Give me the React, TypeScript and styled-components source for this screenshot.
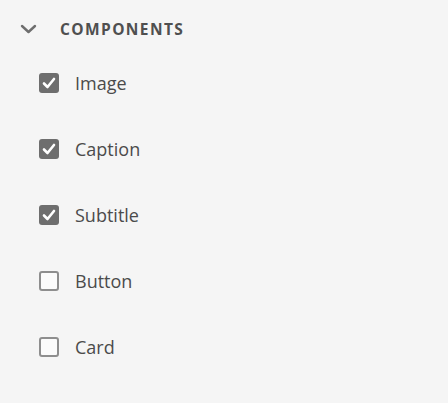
import React from 'react';
import styled, { createGlobalStyle } from 'styled-components';

const GlobalStyle = createGlobalStyle`
  html, body {
    margin: 0;
    padding: 0;
    background: #f5f5f5;
  }
  body {
    font-family: "Open Sans", "Noto Sans", sans-serif;
    color: #4b4b4b;
  }
`;

const Panel = styled.div`
  width: 448px;
  height: 403px;
  box-sizing: border-box;
  padding-top: 15px;
`;

const Header = styled.div`
  display: flex;
  align-items: center;
  height: 28px;
  padding-left: 20px;
`;

const Chevron = styled.svg`
  width: 17px;
  height: 10px;
  flex: none;
`;

const Heading = styled.h3`
  margin: 0 0 0 23px;
  font-size: 15.5px;
  font-weight: 700;
  letter-spacing: 0.09em;
  color: #4f4f4f;
  text-transform: uppercase;
`;

const List = styled.ul`
  list-style: none;
  margin: 24px 0 0 0;
  padding: 0 0 0 39px;
  display: flex;
  flex-direction: column;
  gap: 34px;
`;

const Row = styled.li`
  display: flex;
  align-items: center;
  height: 32px;
  gap: 16px;
`;

const Box = styled.span<{ $checked: boolean }>`
  width: 20px;
  height: 20px;
  box-sizing: border-box;
  border-radius: 3px;
  flex: none;
  display: flex;
  align-items: center;
  justify-content: center;
  background: ${(p) => (p.$checked ? '#6e6e6e' : '#fbfbfb')};
  border: ${(p) => (p.$checked ? 'none' : '2px solid #8e8e8e')};
`;

const Label = styled.span`
  font-size: 18px;
  color: #4b4b4b;
  line-height: 32px;
`;

const items = [
  { label: 'Image', checked: true },
  { label: 'Caption', checked: true },
  { label: 'Subtitle', checked: true },
  { label: 'Button', checked: false },
  { label: 'Card', checked: false },
];

const Check = () => (
  <svg width="14" height="12" viewBox="0 0 14 12">
    <path d="M2 6.5 L5.5 10 L12 2" fill="none" stroke="#ffffff" strokeWidth="2.6" strokeLinecap="round" strokeLinejoin="round" />
  </svg>
);

const App = (): JSX.Element => (
  <>
    <GlobalStyle />
    <Panel>
      <Header>
        <Chevron viewBox="0 0 17 10">
          <path d="M2 2 L8.5 8 L15 2" fill="none" stroke="#6e6e6e" strokeWidth="2.4" strokeLinecap="round" strokeLinejoin="round" />
        </Chevron>
        <Heading>Components</Heading>
      </Header>
      <List>
        {items.map((item) => (
          <Row key={item.label}>
            <Box $checked={item.checked}>{item.checked && <Check />}</Box>
            <Label>{item.label}</Label>
          </Row>
        ))}
      </List>
    </Panel>
  </>
);

export default App;
